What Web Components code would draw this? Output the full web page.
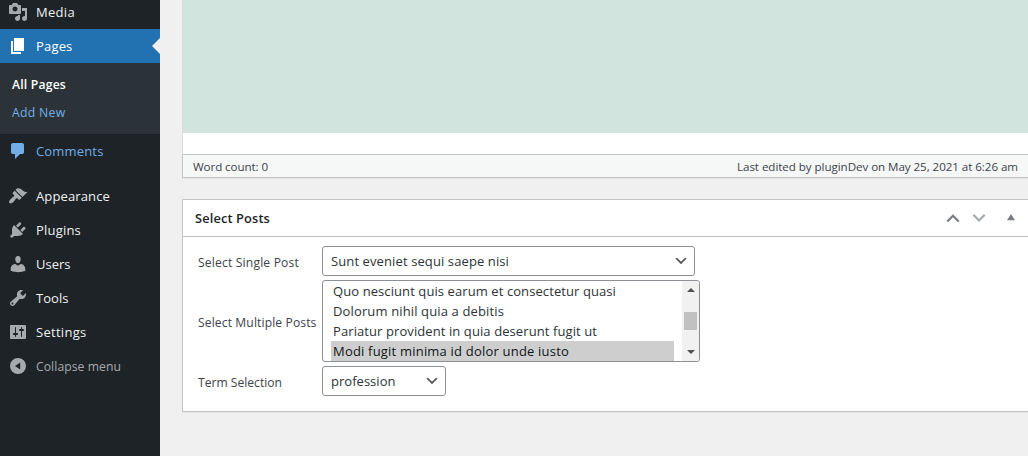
<!DOCTYPE html>
<html lang="en">
<head>
<meta charset="utf-8">
<title>Edit Page</title>
<style>
html,body{margin:0;height:100%;overflow:hidden;background:#f0f0f0}
body{font-family:"Open Sans","Noto Sans",sans-serif;color:#2c3338}
</style>
</head>
<body>
<admin-page></admin-page>
<script>
const define = (name, html, setup) => customElements.define(name, class extends HTMLElement {
  connectedCallback() {
    if (this.shadowRoot) return;
    const t = document.createElement('template');
    t.innerHTML = html;
    this.attachShadow({mode: 'open'}).append(t.content.cloneNode(true));
    if (setup) setup(this, this.shadowRoot);
  }
});

const ICONS = {
  media: 'M13 11V4c0-.55-.45-1-1-1h-1.67L9 1H5L3.67 3H2c-.55 0-1 .45-1 1v7c0 .55.45 1 1 1h10c.55 0 1-.45 1-1zM7 4.5c1.38 0 2.5 1.12 2.5 2.5S8.38 9.5 7 9.5 4.5 8.38 4.5 7 5.62 4.5 7 4.5zM14 6h5v10.5c0 1.38-1.12 2.5-2.5 2.5S14 17.88 14 16.5s1.12-2.5 2.5-2.5c.17 0 .34.02.5.05V9h-3V6zm-4 8.05V13h2v3.5c0 1.38-1.12 2.5-2.5 2.5S7 17.88 7 16.5 8.12 14 9.5 14c.17 0 .34.02.5.05z',
  pages: 'M6 15V2h10v13H6zm-1 1h8v2H3V5h2v11z',
  comments: 'M5 2h9q.82 0 1.41.59T16 4v7q0 .82-.59 1.41T14 13h-2l-5 5v-5H5q-.82 0-1.41-.59T3 11V4q0-.82.59-1.41T5 2z',
  appearance: 'M14.48 11.06L7.41 3.99l1.5-1.5c.5-.56 2.3-.47 3.51.32 1.21.8 1.43 1.28 2.91 2.1 1.18.64 2.45 1.26 4.45.85zm-.71.71L6.7 4.7 4.93 6.47c-.39.39-.39 1.02 0 1.41l1.06 1.06c.39.39.39 1.03 0 1.42-.6.6-1.43 1.11-2.21 1.69-.35.26-.7.53-1.01.84C1.43 14.23.4 16.08 1.4 17.07c.99 1 2.84-.03 4.18-1.36.31-.31.58-.66.85-1.02.57-.78 1.08-1.61 1.69-2.21.39-.39 1.02-.39 1.41 0l1.06 1.06c.39.39 1.02.39 1.41 0z',
  plugins: 'M13.11 4.36L9.87 7.6 8 5.73l3.24-3.24c.35-.34 1.05-.2 1.56.32.52.51.66 1.21.31 1.55zm-8 1.77l.91-1.12 9.01 9.01-1.19.84c-.71.71-2.63 1.16-3.82 1.16H6.14L4.9 17.26c-.59.59-1.54.59-2.12 0-.59-.58-.59-1.53 0-2.12l1.24-1.24v-3.88c0-1.13.4-3.19 1.09-3.89zm7.26 3.97l3.24-3.24c.34-.35 1.04-.21 1.55.31.52.51.66 1.21.31 1.55l-3.24 3.25z',
  users: 'M10 9.25c-2.27 0-2.73-3.44-2.73-3.44C7 4.02 7.82 2 9.97 2c2.16 0 2.98 2.02 2.71 3.81 0 0-.41 3.44-2.68 3.44zm0 2.57L12.72 10c2.39 0 4.52 2.33 4.52 4.53v2.49s-3.65 1.13-7.24 1.13c-3.65 0-7.24-1.13-7.24-1.13v-2.49c0-2.25 1.94-4.48 4.47-4.48z',
  tools: 'M16.68 9.77c-1.34 1.34-3.3 1.67-4.95.99l-5.41 6.52c-.99.99-2.59.99-3.58 0s-.99-2.59 0-3.57l6.52-5.42c-.68-1.65-.35-3.61.99-4.95 1.28-1.28 3.12-1.62 4.72-1.06l-2.89 2.89 2.82 2.82 2.86-2.87c.53 1.58.18 3.39-1.08 4.65zM3.81 16.21c.4.39 1.04.39 1.43 0 .4-.4.4-1.04 0-1.43-.39-.4-1.03-.4-1.43 0-.39.39-.39 1.03 0 1.43z',
  settings: 'M18 16V4c0-.55-.45-1-1-1H3c-.55 0-1 .45-1 1v12c0 .55.45 1 1 1h14c.55 0 1-.45 1-1zM8 11h1c.55 0 1 .45 1 1s-.45 1-1 1H8v1.5c0 .28-.22.5-.5.5s-.5-.22-.5-.5V13H6c-.55 0-1-.45-1-1s.45-1 1-1h1V5.5c0-.28.22-.5.5-.5s.5.22.5.5V11zm5-2h-1c-.55 0-1-.45-1-1s.45-1 1-1h1V5.5c0-.28.22-.5.5-.5s.5.22.5.5V7h1c.55 0 1 .45 1 1s-.45 1-1 1h-1v5.5c0 .28-.22.5-.5.5s-.5-.22-.5-.5V9z',
  collapse: 'M10 2a8 8 0 1 0 0 16a8 8 0 0 0 0-16zM12.2 6.4v7.2L7 10z'
};

// Text run whose tracking is adjusted to fill a given width
define('fit-text', `<style>:host{display:inline-block;white-space:nowrap}span{display:inline-block}</style><span><slot></slot></span>`, (el, root) => {
  const s = root.querySelector('span'), w = +el.getAttribute('w');
  const n = el.textContent.length;
  s.style.letterSpacing = (w - s.getBoundingClientRect().width) / n + 'px';
  el.style.width = w + 'px';
});

define('menu-item', `<style>
:host{display:flex;align-items:center;height:34px;color:#f0f0f1;fill:#a7aaad;font-size:13px;line-height:18px;position:relative}
:host([current]){background:#2271b1;color:#fff;fill:#fff}
:host([hover]){color:#72aee6;fill:#72aee6}
:host([muted]){color:#a7aaad;font-size:12.2px}
:host([muted]) slot{display:block;padding-top:2px}
:host([current])::after{content:"";position:absolute;right:0;top:9px;border:8px solid transparent;border-right-color:#f0f0f0;border-left:0}
svg{width:20px;height:20px;margin:0 8px;flex:none}
</style><svg viewBox="0 0 20 20"><path fill-rule="evenodd"/></svg><slot></slot>`, (el, root) =>
  root.querySelector('path').setAttribute('d', ICONS[el.getAttribute('icon')]));

define('sub-menu', `<style>
:host{display:flex;flex-direction:column;background:#2c3338;height:63px;padding-top:8px;color:#72aee6;font-size:12.2px;line-height:28px}
::slotted(*){margin-left:12px;height:28px}
::slotted([active]){color:#fff;font-weight:600}
</style><slot></slot>`);

define('side-menu', `<style>
:host{display:block;width:160px;background:#1d2327;flex:none}
nav{margin-top:-5px}
.gap{height:11px}
</style><nav>
<menu-item icon="media"><fit-text w="39">Media</fit-text></menu-item>
<menu-item icon="pages" current><fit-text w="36.5">Pages</fit-text></menu-item>
<sub-menu><fit-text w="54" active>All Pages</fit-text><fit-text w="53.5">Add New</fit-text></sub-menu>
<menu-item icon="comments" hover><fit-text w="67.5">Comments</fit-text></menu-item>
<div class="gap"></div>
<menu-item icon="appearance"><fit-text w="74">Appearance</fit-text></menu-item>
<menu-item icon="plugins"><fit-text w="45">Plugins</fit-text></menu-item>
<menu-item icon="users"><fit-text w="34.5">Users</fit-text></menu-item>
<menu-item icon="tools"><fit-text w="32.5">Tools</fit-text></menu-item>
<menu-item icon="settings"><fit-text w="50.5">Settings</fit-text></menu-item>
<menu-item icon="collapse" muted><fit-text w="85">Collapse menu</fit-text></menu-item>
</nav>`);

define('page-editor', `<style>
:host{display:block}
.canvas{height:133px;background:#d1e4dd;border-left:1px solid #dcdcde}
.blank{height:21px;background:#fff;border-left:1px solid #dcdcde}
.status{box-sizing:border-box;height:24px;border:1px solid #c3c4c7;border-right:0;background:#f6f7f7;display:flex;justify-content:space-between;align-items:center;padding:2px 10px 0;font-size:11.6px;line-height:18px;color:#3c434a;box-shadow:0 1px 1px rgba(0,0,0,.04)}
</style><div class="canvas"></div><div class="blank"></div>
<div class="status"><fit-text w="75">Word count: 0</fit-text><fit-text w="281">Last edited by pluginDev on May 25, 2021 at 6:26 am</fit-text></div>`);

define('drop-down', `<style>
:host{display:flex;align-items:center;justify-content:space-between;box-sizing:border-box;height:30px;border:1px solid #8c8f94;border-radius:3px;background:#fff;padding:0 5px 0 8px;font-size:13px;line-height:18px;color:#2c3338}
svg{width:16px;height:16px}
</style><slot></slot><svg viewBox="0 0 20 20"><path d="M5 6l5 5 5-5 2 1-7 7-7-7z" fill="#555"/></svg>`);

define('list-box', `<style>
:host{display:flex;box-sizing:border-box;width:378px;height:82px;border:1px solid #8c8f94;border-radius:3px;background:#fff;overflow:hidden;font-size:13px;line-height:20px;color:#2c3338}
.list{flex:1;padding:0 8px}
.bar{width:17px;background:#f1f1f1;display:flex;flex-direction:column;align-items:center;justify-content:space-between;padding:7px 0;box-sizing:border-box}
i{border:4px solid transparent}
.up{border-top:0;border-bottom-color:#505050}.down{border-bottom:0;border-top-color:#505050}
.thumb{width:13px;height:18px;background:#c1c1c1}
::slotted(*){display:block!important;height:20px;padding-left:2px}
::slotted([selected]){background:#cecece;color:#101517;width:341px!important}
</style><div class="list"><slot></slot></div><div class="bar"><i class="up"></i><div class="thumb"></div><i class="down"></i></div>`);

define('meta-box', `<style>
:host{display:block;box-sizing:border-box;height:213px;margin-top:21px;border:1px solid #c3c4c7;border-right:0;background:#fff;box-shadow:0 1px 1px rgba(0,0,0,.04)}
header{height:36px;border-bottom:1px solid #c3c4c7;display:flex;align-items:center;justify-content:space-between;padding:0 12px;font-size:12.8px;font-weight:600;color:#1d2327}
.tools{display:flex;align-items:center}
.tools svg{display:block}
.grid{display:grid;grid-template-columns:124px max-content;row-gap:4px;padding:9px 0 0 15px;align-items:center;justify-items:start;font-size:12.1px;color:#3c434a}
.lab{padding-top:2px}
</style>
<header><fit-text w="75">Select Posts</fit-text>
<div class="tools">
<svg width="14" height="12" style="margin-right:12px"><path d="M1.3 9.5L7 3.8l5.7 5.7" fill="none" stroke="#787c82" stroke-width="2.2"/></svg>
<svg width="14" height="12" style="margin-right:20px"><path d="M1.3 2.8L7 8.5l5.7-5.7" fill="none" stroke="#a7aaad" stroke-width="2.2"/></svg>
<svg width="10" height="12"><path d="M1 8.2L5 2l4 6.2z" fill="#787c82"/></svg>
</div></header>
<div class="grid">
<fit-text class="lab" w="101">Select Single Post</fit-text><drop-down style="width:373px"><fit-text w="178">Sunt eveniet sequi saepe nisi</fit-text></drop-down>
<fit-text class="lab" w="118.5">Select Multiple Posts</fit-text><list-box>
<fit-text w="283">Quo nesciunt quis earum et consectetur quasi</fit-text><fit-text w="171">Dolorum nihil quia a debitis</fit-text><fit-text w="264">Pariatur provident in quia deserunt fugit ut</fit-text><fit-text w="236" selected>Modi fugit minima id dolor unde iusto</fit-text></list-box>
<fit-text class="lab" w="84">Term Selection</fit-text><drop-down style="width:124px"><fit-text w="64.5">profession</fit-text></drop-down>
</div>`);

define('admin-page', `<style>
:host{display:flex;height:100vh;overflow:hidden;background:#f0f0f0}
main{flex:1;margin-left:22px;min-width:0}
</style><side-menu></side-menu><main><page-editor></page-editor><meta-box></meta-box></main>`);
</script>
</body>
</html>
